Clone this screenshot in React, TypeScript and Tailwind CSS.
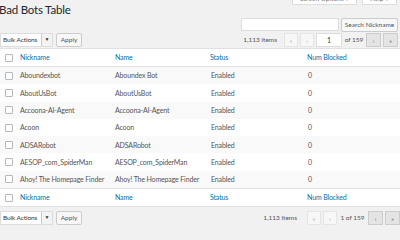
import React from 'react';

const rows = [
    { nick: 'Aboundexbot', name: 'Aboundex Bot' },
    { nick: 'AboutUsBot', name: 'AboutUsBot' },
    { nick: 'Accoona-AI-Agent', name: 'Accoona-AI-Agent' },
    { nick: 'Acoon', name: 'Acoon' },
    { nick: 'ADSARobot', name: 'ADSARobot' },
    { nick: 'AESOP_com_SpiderMan', name: 'AESOP_com_SpiderMan' },
    { nick: 'Ahoy! The Homepage Finder', name: 'Ahoy! The Homepage Finder' },
];

const Checkbox = () => (
    <span className="block w-[8px] h-[8px] bg-white border border-[#b4b9be] rounded-[1px]" />
);

const BulkActions = () => (
    <div className="flex items-center gap-[3px]">
        <div className="flex items-center h-[14px] w-[53px] bg-white border border-[#ddd] text-[6.5px] tracking-[-0.1px] text-[#32373c]">
            <span className="flex-1 pl-[2px] whitespace-nowrap">Bulk Actions</span>
            <span className="w-[11px] h-full flex items-center justify-center border-l border-[#ccc] bg-[#f3f3f3] text-[5px]">▼</span>
        </div>
        <button className="h-[14px] w-[26px] bg-[#f7f7f7] border border-[#ccc] rounded-[2px] text-[6.5px] text-[#555]">Apply</button>
    </div>
);

const PageBtn = ({ label, disabled }: { label: string; disabled?: boolean }) => (
    <span
        className={
            disabled
                ? 'flex items-center justify-center w-[14px] h-[14px] border border-[#e5e5e5] bg-[#f7f7f7] text-[#a0a5aa] text-[6px]'
                : 'flex items-center justify-center w-[15px] h-[14px] border border-[#ccc] bg-[#e4e4e4] text-[#555] text-[6px]'
        }
    >
        {label}
    </span>
);

const HeadRow = () => (
    <div className="flex items-center h-[17px] text-[7px] tracking-[-0.15px] text-[#0073aa]">
        <div className="w-[20px] pl-[5px]"><Checkbox /></div>
        <div className="w-[95px]">Nickname</div>
        <div className="w-[95px]">Name</div>
        <div className="w-[97px]">Status</div>
        <div className="flex-1">Num Blocked</div>
    </div>
);

export default function App() {
    return (
        <div className="w-[400px] h-[240px] overflow-hidden bg-[#f1f1f1] text-[#555]" style={{ fontFamily: 'Lato, "Liberation Sans", sans-serif' }}>
            {/* header */}
            <div className="flex justify-between items-start h-[17px]">
                <h1 className="text-[11.5px] leading-[17px] tracking-[-0.2px] text-[#23282d] -ml-[1px] pt-[1px]">Bad Bots Table</h1>
                <div className="flex gap-[5px] -mt-[9px] pr-[3px]">
                    <span className="h-[14px] w-[65px] bg-white border border-[#ddd] text-[6.5px] text-[#72777c] flex items-end justify-center">Screen Options ▾</span>
                    <span className="h-[14px] w-[35px] bg-white border border-[#ddd] text-[6.5px] text-[#72777c] flex items-end justify-center">Help ▾</span>
                </div>
            </div>

            {/* search */}
            <div className="flex justify-end gap-[2px] pr-[2px] mt-[1px]">
                <span className="h-[13px] w-[98px] bg-white border border-[#ddd]" />
                <button className="h-[14px] w-[57px] bg-[#f7f7f7] border border-[#ccc] rounded-[2px] text-[6.5px] text-[#555] whitespace-nowrap">Search Nickname</button>
            </div>

            {/* top tablenav */}
            <div className="flex justify-between items-center mt-[1px] pr-[2px]">
                <BulkActions />
                <div className="flex items-center gap-[2px] text-[6.5px] text-[#555]">
                    <span className="mr-[5px] whitespace-nowrap">1,113 items</span>
                    <PageBtn label="«" disabled />
                    <PageBtn label="‹" disabled />
                    <span className="h-[14px] w-[26px] bg-white border border-[#ddd] flex items-center justify-center text-[7px] text-[#32373c]">1</span>
                    <span className="w-[20px] text-center whitespace-nowrap">of 159</span>
                    <PageBtn label="›" />
                    <PageBtn label="»" />
                </div>
            </div>

            {/* table */}
            <div className="mt-[1px] bg-white border-y border-[#e1e1e1]">
                <div className="border-b border-[#e1e1e1]"><HeadRow /></div>
                {rows.map((r, i) => (
                    <div key={i} className={'flex items-center h-[17.3px] text-[7px] tracking-[-0.15px] text-[#555] ' + (i % 2 === 0 ? 'bg-[#f9f9f9]' : 'bg-white')}>
                        <div className="w-[20px] pl-[5px]"><Checkbox /></div>
                        <div className="w-[95px] whitespace-nowrap">{r.nick}</div>
                        <div className="w-[95px] whitespace-nowrap">{r.name}</div>
                        <div className="w-[97px] pl-[1px]">Enabled</div>
                        <div className="flex-1 pl-[1px]">0</div>
                    </div>
                ))}
                <div className="border-t border-[#e1e1e1]"><HeadRow /></div>
            </div>

            {/* bottom tablenav */}
            <div className="flex justify-between items-center mt-[4px]">
                <BulkActions />
                <div className="flex items-center gap-[2px] text-[6.5px] text-[#555]">
                    <span className="mr-[8px] whitespace-nowrap">1,113 items</span>
                    <PageBtn label="«" disabled />
                    <PageBtn label="‹" disabled />
                    <span className="w-[27px] text-center whitespace-nowrap">1 of 159</span>
                    <PageBtn label="›" />
                    <PageBtn label="»" />
                </div>
            </div>
        </div>
    );
}
